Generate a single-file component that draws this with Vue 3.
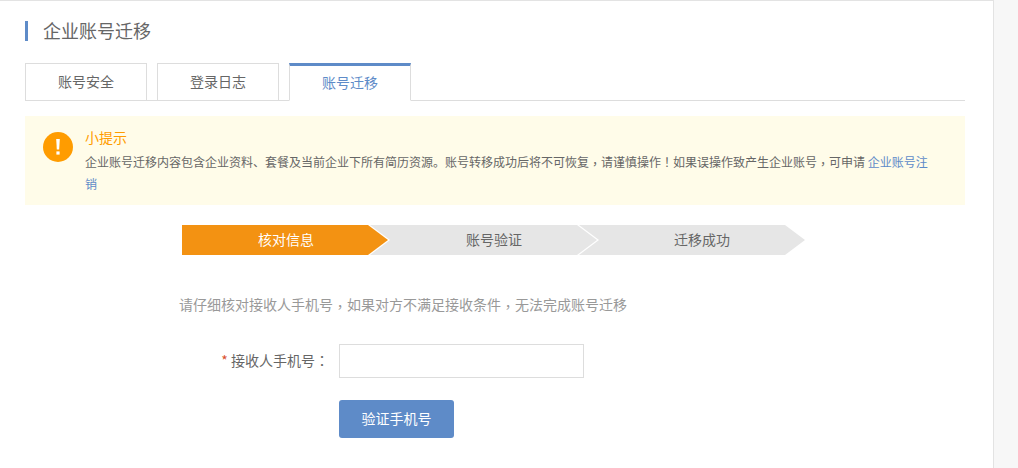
<script setup>
const tabs = [
  { label: '账号安全', active: false },
  { label: '登录日志', active: false },
  { label: '账号迁移', active: true },
]
const steps = [
  { label: '核对信息', active: true },
  { label: '账号验证', active: false },
  { label: '迁移成功', active: false },
]
</script>

<template>
  <div class="shell">
    <main class="main">
      <h1 class="title">企业账号迁移</h1>
      <nav class="tabs">
        <div v-for="t in tabs" :key="t.label" class="tab" :class="{ active: t.active }">{{ t.label }}</div>
      </nav>
      <section class="alert">
        <svg class="alert-icon" width="30" height="30" viewBox="0 0 30 30">
          <circle cx="15" cy="15" r="15" fill="#ff9c00" />
          <path d="M13.2 7h3.6l-.6 10.6h-2.4z" fill="#fff" />
          <rect x="13.4" y="19.4" width="3.2" height="3.2" fill="#fff" />
        </svg>
        <div class="alert-body">
          <div class="alert-title">小提示</div>
          <p class="alert-text">企业账号迁移内容包含企业资料、套餐及当前企业下所有简历资源。账号转移成功后将不可恢复<span class="punct comma">，</span>请谨慎操作<span class="punct">！</span>如果误操作致产生企业账号<span class="punct comma">，</span>可申请 <a class="link">企业账号注销</a></p>
        </div>
      </section>
      <div class="steps">
        <div v-for="(s, i) in steps" :key="s.label" class="step" :class="{ active: s.active }" :style="{ zIndex: 3 - i }">
          <span class="step-label">{{ s.label }}</span>
        </div>
      </div>
      <p class="notice">请仔细核对接收人手机号<span class="punct comma">，</span>如果对方不满足接收条件<span class="punct comma">，</span>无法完成账号迁移</p>
      <div class="field">
        <label class="field-label"><span class="req">*</span> 接收人手机号<span class="punct">：</span></label>
        <input class="field-input" type="text" />
      </div>
      <div class="actions">
        <button class="btn" type="button">验证手机号</button>
      </div>
    </main>
    <aside class="side"></aside>
  </div>
</template>

<style>
html, body { margin: 0; overflow: hidden; background: #fff; }
</style>

<style scoped>
.shell {
  display: flex;
  height: 468px;
  overflow: hidden;
  font-family: "Noto Sans CJK SC", "Liberation Sans", sans-serif;
  color: #666;
}
.punct { font-family: "Noto Sans CJK TC", sans-serif; line-height: 1; }
.comma { vertical-align: -2px; }
.main {
  width: 994px;
  box-sizing: border-box;
  flex: none;
  padding: 20px 28px 0 25px;
  border-top: 1px solid #e3e3e3;
  border-right: 1px solid #e3e3e3;
}
.side { flex: 1; background: #f7f7f7; }
.title {
  margin: 0;
  height: 20px;
  line-height: 18px;
  padding-left: 15px;
  border-left: 3px solid #5e8bc8;
  font-size: 18px;
  font-weight: 400;
  color: #666;
}
.tabs {
  display: flex;
  gap: 10px;
  margin-top: 22px;
  height: 38px;
  box-sizing: border-box;
  border-bottom: 1px solid #ddd;
}
.tab {
  width: 122px;
  height: 38px;
  box-sizing: border-box;
  border: 1px solid #ddd;
  background: #fff;
  font-size: 14px;
  line-height: 34px;
  text-align: center;
  color: #666;
}
.tab.active {
  border-top: 3px solid #5e8bc8;
  border-bottom-color: #fff;
  line-height: 33px;
  color: #5e8bc8;
}
.alert {
  display: flex;
  gap: 12px;
  height: 89px;
  box-sizing: border-box;
  margin-top: 15px;
  padding: 16px 36px 0 18px;
  background: #fffce9;
}
.alert-icon { flex: none; }
.alert-body { flex: 1; min-width: 0; }
.alert-title {
  font-size: 14px;
  line-height: 10px;
  color: #ff9c00;
}
.alert-text {
  margin: 9px 0 0;
  font-size: 12px;
  line-height: 22px;
  color: #666;
}
.link { color: #5e8bc8; }
.steps {
  display: flex;
  margin: 20px 0 0 157px;
}
.step {
  position: relative;
  width: 208px;
  height: 30px;
  box-sizing: border-box;
  padding-bottom: 2px;
  display: flex;
  align-items: center;
  justify-content: center;
  font-size: 14px;
  color: #666;
}
.step::before,
.step::after {
  content: "";
  position: absolute;
  top: 0;
  bottom: 0;
  left: -22px;
  right: 0;
}
.step::before {
  background: #fff;
  clip-path: polygon(0 0, calc(100% - 20px) 0, 100% 50%, calc(100% - 20px) 100%, 0 100%);
}
.step::after {
  right: 2px;
  background: #e6e6e6;
  clip-path: polygon(0 0, calc(100% - 20px) 0, 100% 50%, calc(100% - 20px) 100%, 0 100%);
}
.step:nth-child(n+2)::before { right: -1px; }
.step:nth-child(n+2)::after { right: 1px; }
.step:first-child::before,
.step:first-child::after { left: 0; }
.step.active { color: #fff; }
.step.active::after { background: #f39212; }
.step-label { position: relative; z-index: 1; }
.notice {
  margin: 39px 0 0 154px;
  font-size: 14px;
  line-height: 20px;
  color: #999;
}
.field {
  display: flex;
  align-items: center;
  margin-top: 30px;
}
.field-label {
  width: 314px;
  box-sizing: border-box;
  padding: 0 10px 2px 0;
  text-align: right;
  font-size: 14px;
  color: #666;
  white-space: nowrap;
}
.req { color: #d9502e; }
.field-input {
  width: 245px;
  height: 34px;
  box-sizing: border-box;
  border: 1px solid #ddd;
  background: #fff;
  padding: 0 8px;
  outline: none;
}
.actions {
  margin: 22px 0 0 314px;
}
.btn {
  display: block;
  width: 115px;
  height: 38px;
  border: 0;
  border-radius: 3px;
  background: #5e8bc8;
  color: #fff;
  font-family: inherit;
  font-size: 14px;
  padding: 0 0 2px;
}
</style>
